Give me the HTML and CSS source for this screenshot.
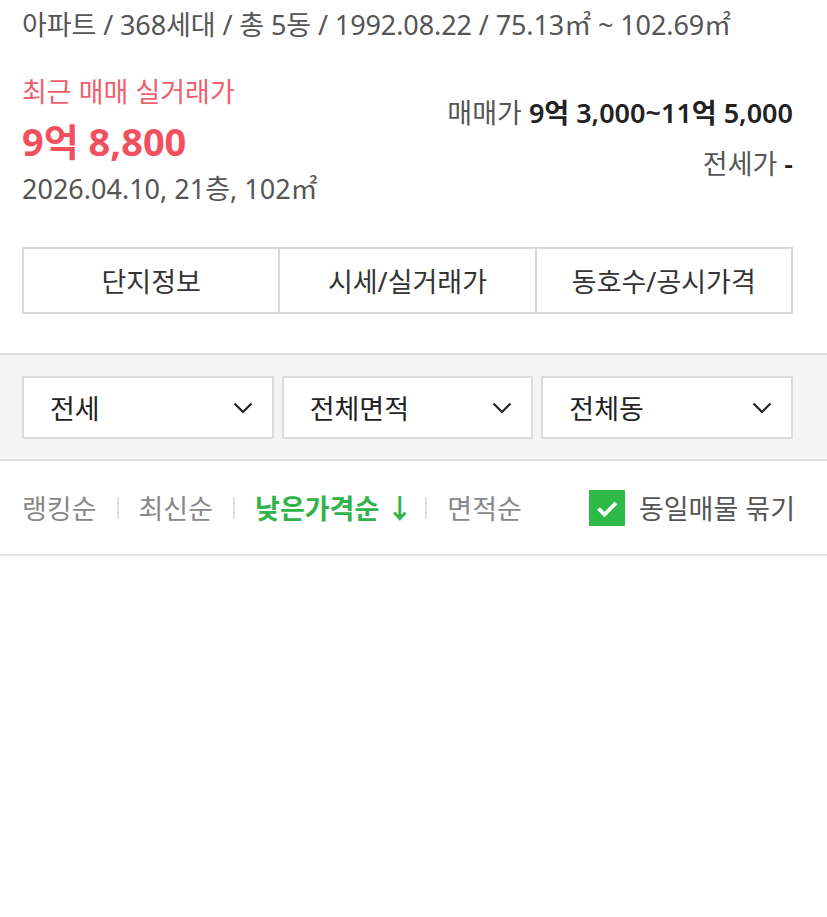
FILE: index.html
```html
<!DOCTYPE html>
<html lang="ko">
<head>
  <meta charset="UTF-8" />
  <title>단지 정보</title>
  <link rel="stylesheet" href="styles.css">
</head>
<body>

  <div class="summary">
    <p class="meta">아파트 / 368세대 / 총 5동 / 1992.08.22 / 75.13㎡ ~ 102.69㎡</p>

    <div class="price-row">
      <div class="recent">
        <div class="recent-label">최근 매매 실거래가</div>
        <div class="recent-price">9억 8,800</div>
        <div class="recent-date">2026.04.10, 21층, 102㎡</div>
      </div>
      <div class="range">
        <div class="range-line">매매가 <strong>9억 3,000~11억 5,000</strong></div>
        <div class="range-line">전세가 <strong>-</strong></div>
      </div>
    </div>

    <div class="tabs">
      <a class="tab">단지정보</a>
      <a class="tab">시세/실거래가</a>
      <a class="tab">동호수/공시가격</a>
    </div>
  </div>

  <div class="filters">
    <div class="select">
      <span>전세</span>
      <svg class="chev" viewBox="0 0 20 12" width="20" height="12"><path d="M1.5 1.5l8.5 8.5 8.5-8.5" fill="none" stroke="#222" stroke-width="2.2"/></svg>
    </div>
    <div class="select">
      <span>전체면적</span>
      <svg class="chev" viewBox="0 0 20 12" width="20" height="12"><path d="M1.5 1.5l8.5 8.5 8.5-8.5" fill="none" stroke="#222" stroke-width="2.2"/></svg>
    </div>
    <div class="select">
      <span>전체동</span>
      <svg class="chev" viewBox="0 0 20 12" width="20" height="12"><path d="M1.5 1.5l8.5 8.5 8.5-8.5" fill="none" stroke="#222" stroke-width="2.2"/></svg>
    </div>
  </div>

  <div class="sort">
    <ul class="sort-list">
      <li>랭킹순</li>
      <li>최신순</li>
      <li class="on">낮은가격순 ↓</li>
      <li>면적순</li>
    </ul>
    <label class="group">
      <span class="check">
        <svg viewBox="0 0 36 36" width="36" height="36"><path d="M9.5 18.5l6 6 11.5-11.5" fill="none" stroke="#fff" stroke-width="3.8"/></svg>
      </span>
      동일매물 묶기
    </label>
  </div>

</body>
</html>
```

FILE: styles.css
```css
body {
  margin: 0;
  background: #fff;
  font-family: "Noto Sans", "Noto Sans CJK KR", sans-serif;
  font-size: 27px;
  color: #333;
}

.summary {
  padding: 0 34px 39px 22px;
}

.meta {
  margin: 0;
  padding-top: 8px;
  line-height: 34px;
  color: #555;
  letter-spacing: -0.1px;
  white-space: nowrap;
}

.price-row {
  display: flex;
  justify-content: space-between;
  margin-top: 33px;
}

.recent-label {
  line-height: 34px;
  color: #f0606c;
}

.recent-price {
  font-size: 38px;
  font-weight: bold;
  line-height: 64px;
  color: #f2505e;
}

.recent-date {
  line-height: 32px;
  color: #555;
}

.range {
  text-align: right;
  padding-top: 21px;
}

.range-line {
  line-height: 34px;
  color: #555;
  margin-bottom: 17px;
}

.range-line strong {
  color: #222;
  font-weight: 600;
}

.tabs {
  display: flex;
  margin-top: 42px;
  border: 2px solid #d8d8d8;
  height: 63px;
}

.tab {
  flex: 1;
  display: flex;
  align-items: center;
  justify-content: center;
  color: #333;
}

.tab + .tab {
  border-left: 2px solid #d8d8d8;
}

.filters {
  display: flex;
  gap: 8px;
  padding: 21px 34px 20px 22px;
  background: #f4f4f4;
  border-top: 2px solid #e0e0e0;
  border-bottom: 2px solid #e0e0e0;
}

.select {
  flex: 1;
  height: 59px;
  display: flex;
  align-items: center;
  justify-content: space-between;
  padding: 0 19px 0 26px;
  background: #fff;
  border: 2px solid #dcdcdc;
  color: #222;
}

.chev {
  display: block;
}

.sort {
  display: flex;
  justify-content: space-between;
  align-items: center;
  height: 93px;
  padding: 0 32px 0 22px;
  border-bottom: 2px solid #e6e6e6;
}

.sort-list {
  display: flex;
  margin: 0;
  padding: 0;
  list-style: none;
}

.sort-list li {
  color: #888;
  display: flex;
  align-items: center;
  white-space: nowrap;
}

.sort-list li + li::before {
  content: "";
  width: 2px;
  height: 22px;
  background: #e2e2e2;
  margin: 0 20px;
}

.sort-list li.on {
  color: #30b34a;
  font-weight: bold;
  margin-right: -8px;
}

.group {
  display: flex;
  align-items: center;
  gap: 14px;
  color: #555;
}

.check {
  width: 36px;
  height: 36px;
  background: #2fba48;
  display: block;
}

.check svg {
  display: block;
}
```
